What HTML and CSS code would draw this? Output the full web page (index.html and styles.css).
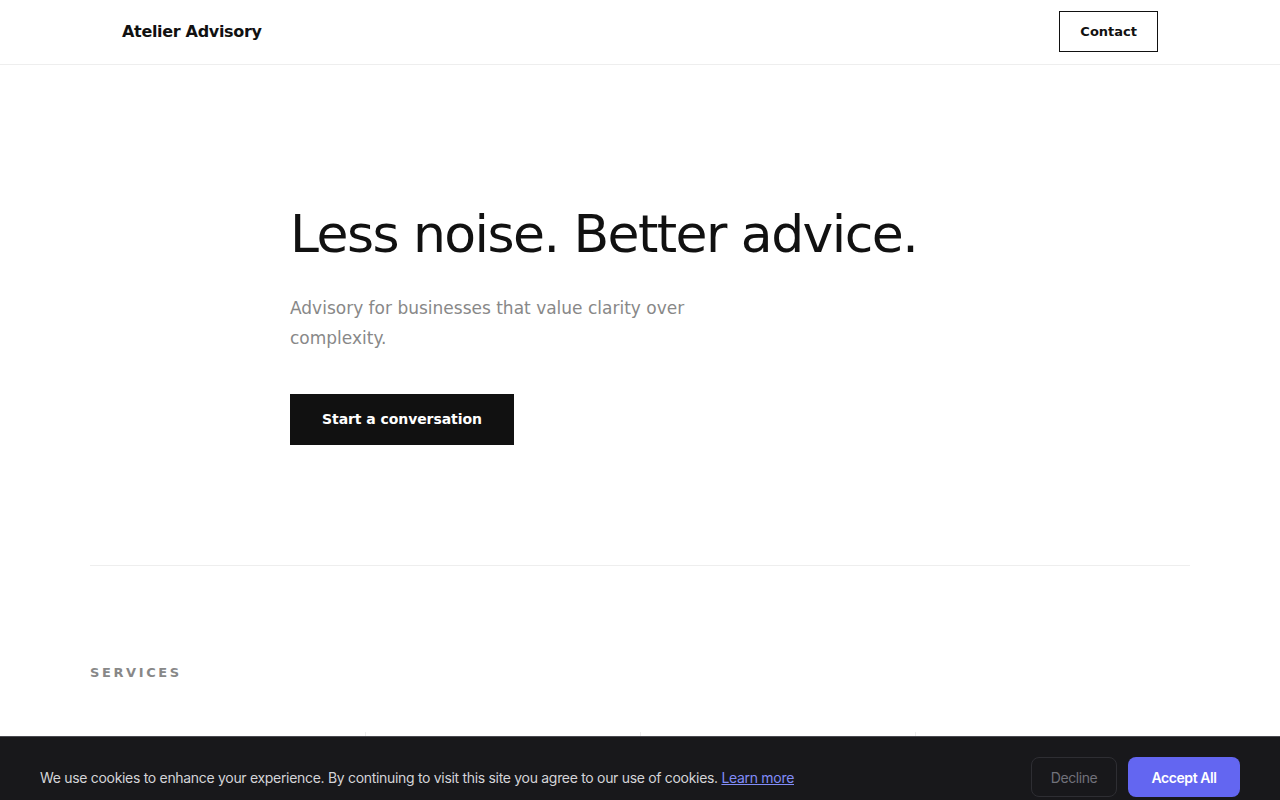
FILE: index.html
```html
<!DOCTYPE html>
<html lang="en">
<head>
<meta charset="utf-8">
<title>Atelier Advisory</title>
<link rel="stylesheet" href="styles.css">
</head>
<body>
<header class="nav">
  <div class="nav-inner">
    <a class="brand" href="#">Atelier Advisory</a>
    <a class="btn-outline" href="#">Contact</a>
  </div>
</header>
<main>
  <section class="hero">
    <h1 class="hero-title">Less noise. Better advice.</h1>
    <p class="hero-sub">Advisory for businesses that value clarity over complexity.</p>
    <a class="btn-solid" href="#">Start a conversation</a>
  </section>
  <div class="container"><hr class="divider"></div>
  <section class="container services">
    <h2 class="eyebrow">Services</h2>
    <div class="service-grid">
      <div class="service-card"><span class="num">01</span><h3>Strategy</h3><p>Clear direction for the decisions that matter most.</p></div>
      <div class="service-card"><span class="num">02</span><h3>Operations</h3><p>Simpler processes that scale with your business.</p></div>
      <div class="service-card"><span class="num">03</span><h3>Finance</h3><p>Honest numbers and a plan you can act on.</p></div>
      <div class="service-card"><span class="num">04</span><h3>Leadership</h3><p>Support for the people steering the company.</p></div>
    </div>
  </section>
</main>
<div class="cookie">
  <p class="cookie-text">We use cookies to enhance your experience. By continuing to visit this site you agree to our use of cookies. <a href="#">Learn more</a></p>
  <div class="cookie-actions">
    <button class="btn-decline">Decline</button>
    <button class="btn-accept">Accept All</button>
  </div>
</div>
</body>
</html>
```

FILE: styles.css
```css
* { box-sizing: border-box; }
html, body { margin: 0; padding: 0; }
body {
  font-family: "DejaVu Sans", sans-serif;
  color: #111;
  background: #fff;
}
a { text-decoration: none; color: inherit; }

.nav {
  height: 65px;
  border-bottom: 1px solid #eeeeee;
}
.nav-inner {
  max-width: 1100px;
  margin: 0 auto;
  padding: 0 32px;
  height: 63px;
  display: flex;
  align-items: center;
  justify-content: space-between;
}
.brand {
  font-weight: 700;
  font-size: 16px;
  letter-spacing: -0.02em;
  color: #111;
}
.btn-outline {
  border: 1px solid #111;
  padding: 12px 20px;
  font-size: 13px;
  line-height: 15px;
  font-weight: 700;
  color: #111;
}

.hero {
  max-width: 700px;
  margin: 0 auto;
  padding: 141px 0 120px;
}
.hero-title {
  margin: 0 0 30px;
  font-size: 52px;
  line-height: 1.1;
  font-weight: 400;
  letter-spacing: -0.03em;
  color: #111;
}
.hero-sub {
  margin: 0 0 41px;
  max-width: 460px;
  font-size: 17px;
  line-height: 30px;
  color: #888888;
}
.btn-solid {
  display: inline-block;
  background: #111;
  color: #fff;
  font-size: 14px;
  line-height: 17px;
  font-weight: 700;
  letter-spacing: -0.005em;
  padding: 17px 32px;
}

.container {
  max-width: 1100px;
  margin: 0 auto;
}
.divider {
  margin: 0;
  border: 0;
  border-top: 1px solid #eeeeee;
}
.services {
  padding-top: 98px;
}
.eyebrow {
  margin: 0 0 50px;
  font-size: 13px;
  line-height: 18px;
  font-weight: 700;
  letter-spacing: 0.2em;
  text-transform: uppercase;
  color: #888888;
}
.service-grid {
  display: grid;
  grid-template-columns: repeat(4, 1fr);
}
.service-card {
  padding: 90px 32px 40px;
  border-left: 1px solid #eeeeee;
  min-height: 260px;
}
.service-card:first-child { border-left: 0; padding-left: 0; }
.service-card .num { font-size: 12px; color: #888; }
.service-card h3 { font-size: 20px; font-weight: 400; margin: 16px 0 12px; }
.service-card p { font-size: 15px; line-height: 1.6; color: #888; margin: 0; }

.cookie {
  position: fixed;
  left: 0;
  right: 0;
  bottom: -17px;
  background: #18181b;
  border-top: 1px solid #4a4a50;
  padding: 20px 40px;
  display: flex;
  align-items: center;
  justify-content: space-between;
  font-family: Inter, "Liberation Sans", sans-serif;
  z-index: 10;
}
.cookie-text {
  margin: 0;
  font-size: 14px;
  letter-spacing: -0.022em;
  color: #d4d4d8;
}
.cookie-text a {
  color: #818cf8;
  text-decoration: underline;
}
.cookie-actions {
  display: flex;
  gap: 11px;
}
.btn-decline, .btn-accept {
  height: 40px;
  padding: 0;
  border-radius: 8px;
  font-family: Inter, "Liberation Sans", sans-serif;
  font-size: 14px;
  letter-spacing: -0.03em;
  cursor: pointer;
}
.btn-decline {
  background: transparent;
  border: 1px solid #2e2e33;
  color: #71717a;
  font-weight: 400;
  width: 86px;
}
.btn-accept {
  background: #6366f1;
  border: 0;
  color: #fff;
  font-weight: 600;
  width: 112px;
}
```
